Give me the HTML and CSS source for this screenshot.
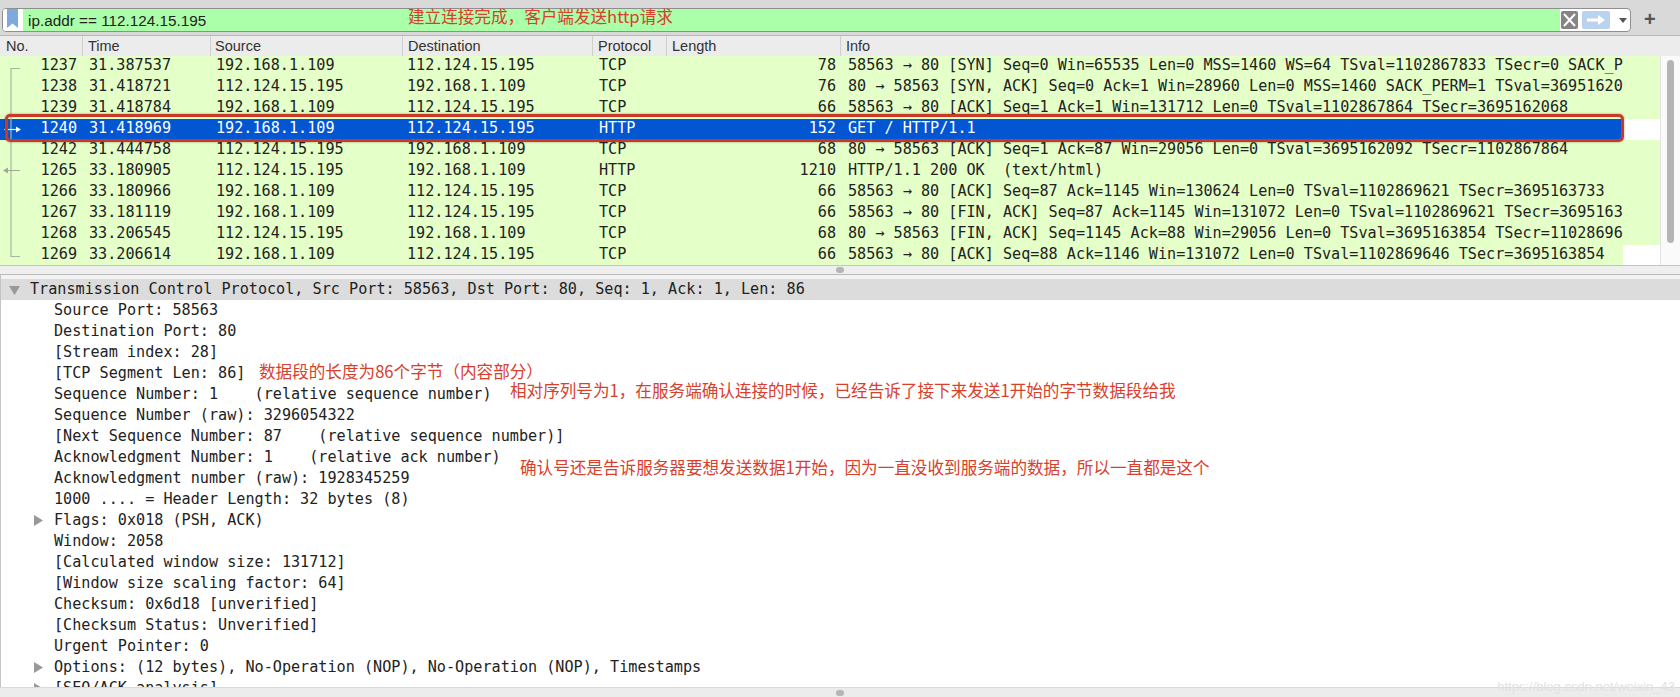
FILE: index.html
```html
<html>

<head>
    <title>Wireshark</title>
    <meta charset="utf-8">
    <link rel="stylesheet" href="styles.css">
</head>

<body>
    <div class="filter-bar">
        <div class="filter-box">
            <div class="bookmark">
                <svg width="13" height="20" viewBox="0 0 13 20"><path d="M1 0H12V19L6.500 14.500L1 19Z" fill="#7fa8dc"/></svg>
            </div>
            <div class="filter-text">ip.addr == 112.124.15.195</div>
            <div class="filter-buttons">
                <svg width="17" height="18" viewBox="0 0 17 18"><rect width="17" height="18" rx="2" fill="#858585"/><path d="M3 3L14 15M14 3L3 15" stroke="#fff" stroke-width="2"/></svg>
                <svg class="apply" width="28" height="18" viewBox="0 0 28 18"><rect width="28" height="18" rx="2" fill="#b9d2ee"/><path d="M5 7.500H16V4L23 9L16 14V10.500H5Z" fill="#fff"/></svg>
                <svg class="drop" width="8" height="5" viewBox="0 0 8 5"><path d="M0 0H8L4 5Z" fill="#555"/></svg>
            </div>
        </div>
        <div class="plus">+</div>
    </div>

    <div class="list-head">
        <div class="col-no">No.</div>
        <div class="col-time sep">Time</div>
        <div class="col-source sep">Source</div>
        <div class="col-dest sep">Destination</div>
        <div class="col-proto sep">Protocol</div>
        <div class="col-len sep">Length</div>
        <div class="col-info sep">Info</div>
    </div>

    <div class="list-wrap">
        <div class="list">
            <div class="row"><div class="col-no">1237</div><div class="col-time">31.387537</div><div class="col-source">192.168.1.109</div><div class="col-dest">112.124.15.195</div><div class="col-proto">TCP</div><div class="col-len">78</div><div class="col-info">58563 → 80 [SYN] Seq=0 Win=65535 Len=0 MSS=1460 WS=64 TSval=1102867833 TSecr=0 SACK_P</div></div>
            <div class="row"><div class="col-no">1238</div><div class="col-time">31.418721</div><div class="col-source">112.124.15.195</div><div class="col-dest">192.168.1.109</div><div class="col-proto">TCP</div><div class="col-len">76</div><div class="col-info">80 → 58563 [SYN, ACK] Seq=0 Ack=1 Win=28960 Len=0 MSS=1460 SACK_PERM=1 TSval=36951620</div></div>
            <div class="row"><div class="col-no">1239</div><div class="col-time">31.418784</div><div class="col-source">192.168.1.109</div><div class="col-dest">112.124.15.195</div><div class="col-proto">TCP</div><div class="col-len">66</div><div class="col-info">58563 → 80 [ACK] Seq=1 Ack=1 Win=131712 Len=0 TSval=1102867864 TSecr=3695162068</div></div>
            <div class="row selected"><div class="col-no">1240</div><div class="col-time">31.418969</div><div class="col-source">192.168.1.109</div><div class="col-dest">112.124.15.195</div><div class="col-proto">HTTP</div><div class="col-len">152</div><div class="col-info">GET / HTTP/1.1</div></div>
            <div class="row"><div class="col-no">1242</div><div class="col-time">31.444758</div><div class="col-source">112.124.15.195</div><div class="col-dest">192.168.1.109</div><div class="col-proto">TCP</div><div class="col-len">68</div><div class="col-info">80 → 58563 [ACK] Seq=1 Ack=87 Win=29056 Len=0 TSval=3695162092 TSecr=1102867864</div></div>
            <div class="row"><div class="col-no">1265</div><div class="col-time">33.180905</div><div class="col-source">112.124.15.195</div><div class="col-dest">192.168.1.109</div><div class="col-proto">HTTP</div><div class="col-len">1210</div><div class="col-info">HTTP/1.1 200 OK  (text/html)</div></div>
            <div class="row"><div class="col-no">1266</div><div class="col-time">33.180966</div><div class="col-source">192.168.1.109</div><div class="col-dest">112.124.15.195</div><div class="col-proto">TCP</div><div class="col-len">66</div><div class="col-info">58563 → 80 [ACK] Seq=87 Ack=1145 Win=130624 Len=0 TSval=1102869621 TSecr=3695163733</div></div>
            <div class="row"><div class="col-no">1267</div><div class="col-time">33.181119</div><div class="col-source">192.168.1.109</div><div class="col-dest">112.124.15.195</div><div class="col-proto">TCP</div><div class="col-len">66</div><div class="col-info">58563 → 80 [FIN, ACK] Seq=87 Ack=1145 Win=131072 Len=0 TSval=1102869621 TSecr=3695163</div></div>
            <div class="row"><div class="col-no">1268</div><div class="col-time">33.206545</div><div class="col-source">112.124.15.195</div><div class="col-dest">192.168.1.109</div><div class="col-proto">TCP</div><div class="col-len">68</div><div class="col-info">80 → 58563 [FIN, ACK] Seq=1145 Ack=88 Win=29056 Len=0 TSval=3695163854 TSecr=11028696</div></div>
            <div class="row row-last"><div class="col-no">1269</div><div class="col-time">33.206614</div><div class="col-source">192.168.1.109</div><div class="col-dest">112.124.15.195</div><div class="col-proto">TCP</div><div class="col-len">66</div><div class="col-info">58563 → 80 [ACK] Seq=88 Ack=1146 Win=131072 Len=0 TSval=1102869646 TSecr=3695163854</div></div>

            <!-- conversation tree in the No. column -->
            <svg class="tree" width="30" height="209" viewBox="0 0 30 209">
                <path d="M20 12.500H11V200.500H20" fill="none" stroke="#a9b59f" stroke-width="1.200"/>
                <path d="M6 114.500H20" stroke="#a0a89a" stroke-width="1"/>
                <path d="M8 111.500L3 114.500L8 117.500Z" fill="#a0a89a"/>
                <path d="M4 73.500H18" stroke="#dfe8f5" stroke-width="1.200"/>
                <path d="M16 70.500L21 73.500L16 76.500Z" fill="#fff"/>
            </svg>
            <div class="red-box"></div>
        </div>
        <div class="scroll-track"><div class="scroll-thumb"></div></div>
    </div>

    <div class="splitter"><div class="grip"></div></div>

    <div class="details">
        <div class="det-head"><svg class="tri" width="11" height="9" viewBox="0 0 11 9"><path d="M0 0H11L5.500 9Z" fill="#999"/></svg>Transmission Control Protocol, Src Port: 58563, Dst Port: 80, Seq: 1, Ack: 1, Len: 86</div>
        <div class="det">Source Port: 58563</div>
        <div class="det">Destination Port: 80</div>
        <div class="det">[Stream index: 28]</div>
        <div class="det">[TCP Segment Len: 86]</div>
        <div class="det">Sequence Number: 1    (relative sequence number)</div>
        <div class="det">Sequence Number (raw): 3296054322</div>
        <div class="det">[Next Sequence Number: 87    (relative sequence number)]</div>
        <div class="det">Acknowledgment Number: 1    (relative ack number)</div>
        <div class="det">Acknowledgment number (raw): 1928345259</div>
        <div class="det">1000 .... = Header Length: 32 bytes (8)</div>
        <div class="det"><svg class="tri-r" width="9" height="11" viewBox="0 0 9 11"><path d="M0 0V11L9 5.500Z" fill="#999"/></svg>Flags: 0x018 (PSH, ACK)</div>
        <div class="det">Window: 2058</div>
        <div class="det">[Calculated window size: 131712]</div>
        <div class="det">[Window size scaling factor: 64]</div>
        <div class="det">Checksum: 0x6d18 [unverified]</div>
        <div class="det">[Checksum Status: Unverified]</div>
        <div class="det">Urgent Pointer: 0</div>
        <div class="det"><svg class="tri-r" width="9" height="11" viewBox="0 0 9 11"><path d="M0 0V11L9 5.500Z" fill="#999"/></svg>Options: (12 bytes), No-Operation (NOP), No-Operation (NOP), Timestamps</div>
        <div class="det"><svg class="tri-r" width="9" height="11" viewBox="0 0 9 11"><path d="M0 0V11L9 5.500Z" fill="#999"/></svg>[SEQ/ACK analysis]</div>
    </div>

    <div class="bottom-bar"><div class="grip"></div><span class="watermark">https://blog.csdn.net/weixin_43</span></div>

    <!-- red notes pasted over the screenshot -->
    <div class="note note-filter">建立连接完成，客户端发送http请求</div>
    <div class="note note-len">数据段的长度为86个字节（内容部分）</div>
    <div class="note note-seq">相对序列号为1，在服务端确认连接的时候，已经告诉了接下来发送1开始的字节数据段给我</div>
    <div class="note note-ack">确认号还是告诉服务器要想发送数据1开始，因为一直没收到服务端的数据，所以一直都是这个</div>
</body>

</html>
```

FILE: styles.css
```css
html, body {
    margin: 0;
    padding: 0;
    height: 697px;
    overflow: hidden;
    background-color: #fff;
}

body {
    position: relative;
    font-family: "DejaVu Sans Mono", monospace;
    font-size: 15.15px;
    color: #222;
}

/* filter bar */
.filter-bar {
    height: 36px;
    box-sizing: border-box;
    padding: 8px 0 0 2px;
    display: flex;
    background-color: #d9d9d9;
    border-bottom: 1px solid #b8b8b8;
}

.filter-box {
    width: 1629px;
    height: 24px;
    box-sizing: border-box;
    display: flex;
    align-items: stretch;
    border: 1px solid #8f8f8f;
    border-radius: 4px;
    overflow: hidden;
    background-color: #fff;
}

.bookmark {
    width: 20px;
    padding-left: 3px;
    box-sizing: border-box;
    background-color: #fff;
}

.filter-text {
    flex: 1;
    padding-left: 5px;
    font-family: "Liberation Sans", sans-serif;
    font-size: 15.3px;
    line-height: 23px;
    color: #222;
    background-color: #abffa8;
}

.filter-buttons {
    width: 70px;
    display: flex;
    align-items: center;
    padding-left: 1px;
    box-sizing: border-box;
}

.filter-buttons .apply {
    margin-left: 4px;
}

.filter-buttons .drop {
    margin-left: 9px;
}

.plus {
    margin-left: 13px;
    font-family: "Liberation Sans", sans-serif;
    font-size: 20px;
    font-weight: bold;
    line-height: 22px;
    color: #555;
}

/* packet list */
.list-head,
.row {
    display: grid;
    grid-template-columns: 82px 128px 192px 190px 74px 174px 1fr;
}

.list-head {
    height: 20px;
    background-color: #ececec;
    font-family: "Liberation Sans", sans-serif;
    font-size: 14.5px;
    line-height: 20px;
    color: #333;
}

.list-head div {
    padding-left: 5px;
}

.list-head .col-no {
    padding-left: 6px;
}

.list-head .col-source {
    padding-left: 4px;
}

.list-head .sep {
    border-left: 1px solid #cfcfcf;
}

.list-wrap {
    display: flex;
    height: 209px;
    border-bottom: 1px solid #c4c4c4;
}

.list {
    flex: 1;
    position: relative;
    overflow: hidden;
}

.row {
    height: 21px;
    line-height: 19px;
    background-color: #e4ffc7;
    white-space: pre;
}

.row-last {
    height: 22px;
    margin-right: 37px;
}

.row .col-no {
    text-align: right;
    padding-right: 5px;
}

.row .col-time,
.row .col-proto {
    padding-left: 7px;
}

.row .col-source {
    padding-left: 6px;
}

.row .col-dest {
    padding-left: 5px;
}

.row .col-len {
    text-align: right;
    padding-right: 4px;
}

.row .col-info {
    padding-left: 8px;
    margin-right: 37px;
}

.row-last .col-info {
    margin-right: 0;
}

.selected {
    background-color: #0256d2;
    color: #fff;
    margin-right: 37px;
}

.selected .col-info {
    margin-right: 0;
}

.tree {
    position: absolute;
    left: 0;
    top: 0;
}

.red-box {
    position: absolute;
    left: 5px;
    top: 58px;
    width: 1619px;
    height: 28px;
    box-sizing: border-box;
    border: 3px solid #c93a26;
    border-radius: 5px;
    box-shadow: 0 0 2px rgba(90, 30, 20, 0.6);
}

.scroll-track {
    width: 20px;
    box-sizing: border-box;
    padding: 4px 6px 22px 6px;
    background-color: #fafafa;
    border-left: 1px solid #e2e2e2;
}

.scroll-thumb {
    height: 183px;
    background-color: #b4b4b4;
    border-radius: 4px;
}

/* splitters */
.splitter {
    height: 8px;
    background-color: #efefef;
    border-bottom: 1px solid #b9b9b9;
    display: flex;
    justify-content: center;
    align-items: center;
}

.grip {
    width: 8px;
    height: 6px;
    border-radius: 3px;
    background-color: #b5b5b5;
}

/* packet details */
.details {
    height: 412px;
    box-sizing: border-box;
    overflow: hidden;
    border-left: 1px solid #c4c4c4;
    padding-top: 4px;
    background: linear-gradient(#f3f3f3 4px, #fff 4px);
}

.det-head {
    height: 21px;
    line-height: 20px;
    padding-left: 29px;
    position: relative;
    white-space: pre;
    background-color: #dcdcdc;
}

.tri {
    position: absolute;
    left: 8px;
    top: 7px;
}

.det {
    height: 21px;
    line-height: 20px;
    padding-left: 53px;
    position: relative;
    white-space: pre;
}

.tri-r {
    position: absolute;
    left: 33px;
    top: 5px;
}

.bottom-bar {
    height: 10px;
    position: relative;
    background-color: #ececec;
    border-top: 1px solid #dadada;
    display: flex;
    justify-content: center;
    align-items: center;
}

.watermark {
    position: absolute;
    right: 5px;
    top: -9px;
    font-family: "Liberation Sans", sans-serif;
    font-size: 13px;
    color: #e2e2e2;
}

/* annotations */
.note {
    position: absolute;
    font-family: "Noto Sans CJK SC", "Liberation Sans", sans-serif;
    font-size: 16.6px;
    line-height: 22px;
    color: #d8402c;
    white-space: nowrap;
}

.note-filter {
    left: 408px;
    top: 5px;
}

.note-len {
    left: 259px;
    top: 360px;
}

.note-seq {
    left: 510px;
    top: 379px;
}

.note-ack {
    left: 520px;
    top: 456px;
}
```
